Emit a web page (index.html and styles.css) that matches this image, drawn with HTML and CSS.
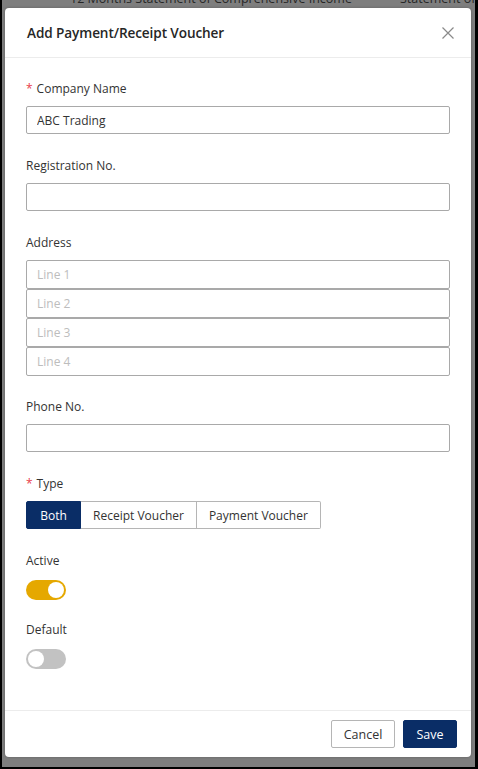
FILE: index.html
```html
<!DOCTYPE html>
<html lang="en">
<head>
<meta charset="utf-8">
<title>Add Payment/Receipt Voucher</title>
<link rel="stylesheet" href="styles.css">
</head>
<body>
<div class="screen">
  <div class="page-behind">
    <span class="bg-title">12 Months Statement of Comprehensive Income</span>
    <span class="bg-title bg-right">Statement of</span>
  </div>

  <div class="modal" role="dialog" aria-labelledby="modal-title">
    <div class="modal-header">
      <h2 id="modal-title" class="modal-title">Add Payment/Receipt Voucher</h2>
      <button class="close-btn" aria-label="Close">
        <svg width="12" height="12" viewBox="0 0 12 12"><path d="M0.5 0.5 L11.5 11.5 M11.5 0.5 L0.5 11.5" stroke="#8a8a8a" stroke-width="1.2" fill="none"/></svg>
      </button>
    </div>

    <div class="modal-body">
      <div class="field">
        <label class="label"><span class="req">*</span>Company Name</label>
        <input class="input" type="text" value="ABC Trading">
      </div>

      <div class="field">
        <label class="label">Registration No.</label>
        <input class="input" type="text">
      </div>

      <div class="field field-address">
        <label class="label">Address</label>
        <div class="address-stack">
          <input class="input input-line" type="text" placeholder="Line 1">
          <input class="input input-line" type="text" placeholder="Line 2">
          <input class="input input-line" type="text" placeholder="Line 3">
          <input class="input input-line" type="text" placeholder="Line 4">
        </div>
      </div>

      <div class="field">
        <label class="label">Phone No.</label>
        <input class="input" type="text">
      </div>

      <div class="field">
        <label class="label"><span class="req">*</span>Type</label>
        <div class="segmented">
          <button class="seg seg-active">Both</button>
          <button class="seg">Receipt Voucher</button>
          <button class="seg">Payment Voucher</button>
        </div>
      </div>

      <div class="field field-toggle">
        <label class="label label-toggle">Active</label>
        <span class="switch switch-on"><span class="knob"></span></span>
      </div>

      <div class="field field-toggle">
        <label class="label label-toggle">Default</label>
        <span class="switch"><span class="knob"></span></span>
      </div>
    </div>

    <div class="modal-footer">
      <button class="btn btn-default">Cancel</button>
      <button class="btn btn-primary">Save</button>
    </div>
  </div>
</div>
</body>
</html>
```

FILE: styles.css
```css
* { box-sizing: border-box; }

html, body {
  margin: 0;
  padding: 0;
  background: #000;
  width: 478px;
  height: 769px;
  overflow: hidden;
}

body {
  font-family: "Open Sans", "Noto Sans", sans-serif;
  color: #333;
}

.screen {
  position: relative;
  margin: 0 3px 0 2px;
  height: 767px;
  background: #7e7e7e;
  overflow: hidden;
}

.page-behind {
  height: 8px;
  overflow: hidden;
  position: relative;
}

.bg-title {
  position: absolute;
  top: -10px;
  left: 68px;
  font-size: 12.5px;
  color: #262626;
  white-space: nowrap;
}

.bg-right {
  left: 398px;
}

.modal {
  position: absolute;
  left: 3px;
  top: 8px;
  width: 466px;
  height: 749px;
  background: #fff;
  border-radius: 4px;
  display: flex;
  flex-direction: column;
  box-shadow: 0 0 3px rgba(0, 0, 0, 0.25);
}

.modal-header {
  height: 50px;
  border-bottom: 1px solid #ececec;
  display: flex;
  align-items: center;
  justify-content: space-between;
  padding: 0 17px 0 22px;
}

.modal-title {
  margin: 0;
  font-size: 13.6px;
  font-weight: 600;
  color: #262626;
  letter-spacing: -0.1px;
}

.close-btn {
  border: 0;
  background: none;
  padding: 0;
  width: 12px;
  height: 12px;
  display: flex;
  margin-top: 1px;
}

.modal-body {
  flex: 1;
  padding: 21px 21px 0 21px;
}

.field {
  margin-bottom: 22px;
}

.field-address {
  margin-bottom: 21px;
}

.field-toggle {
  margin-bottom: 20px;
}

.label {
  display: block;
  font-size: 12px;
  line-height: 20px;
  height: 20px;
  margin-bottom: 7px;
  color: #333;
}

.label-toggle {
  margin-bottom: 9px;
}

.req {
  color: #e8414c;
  margin-right: 4px;
  font-size: 12px;
}

.input {
  display: block;
  width: 100%;
  height: 28px;
  border: 1px solid #a9a9a9;
  border-radius: 2px;
  padding: 0 10px;
  font-family: inherit;
  font-size: 12px;
  color: #333;
  background: #fff;
  outline: none;
}

.input::placeholder {
  color: #bdbdbd;
}

.address-stack {
  display: flex;
  flex-direction: column;
}

.input-line {
  height: 29px;
}

.segmented {
  display: flex;
  height: 28px;
}

.seg {
  height: 28px;
  border: 1px solid #b5b5b5;
  border-left-width: 0;
  background: #fff;
  font-family: inherit;
  font-size: 12px;
  color: #333;
  padding: 0 12px;
}

.seg:first-child {
  border-left-width: 1px;
  border-radius: 2px 0 0 2px;
}

.seg:last-child {
  border-radius: 0 2px 2px 0;
}

.seg-active {
  background: #0a2d66;
  border-color: #0a2d66;
  color: #fff;
  width: 55px;
  padding: 0;
}

.switch {
  display: flex;
  align-items: center;
  width: 40px;
  height: 20px;
  border-radius: 10px;
  background: #c2c2c2;
  padding: 2px;
}

.switch-on {
  background: #e5a800;
  justify-content: flex-end;
}

.knob {
  width: 16px;
  height: 16px;
  border-radius: 50%;
  background: #fff;
}

.modal-footer {
  height: 47px;
  border-top: 1px solid #ececec;
  display: flex;
  justify-content: flex-end;
  gap: 8px;
  padding: 9px 14px 0 0;
}

.btn {
  height: 28px;
  font-family: inherit;
  font-size: 12.5px;
  border-radius: 2px;
}

.btn-default {
  width: 64px;
  background: #fff;
  border: 1px solid #b5b5b5;
  color: #333;
}

.btn-primary {
  width: 54px;
  background: #0a2d66;
  border: 1px solid #0a2d66;
  color: #fff;
}
```
